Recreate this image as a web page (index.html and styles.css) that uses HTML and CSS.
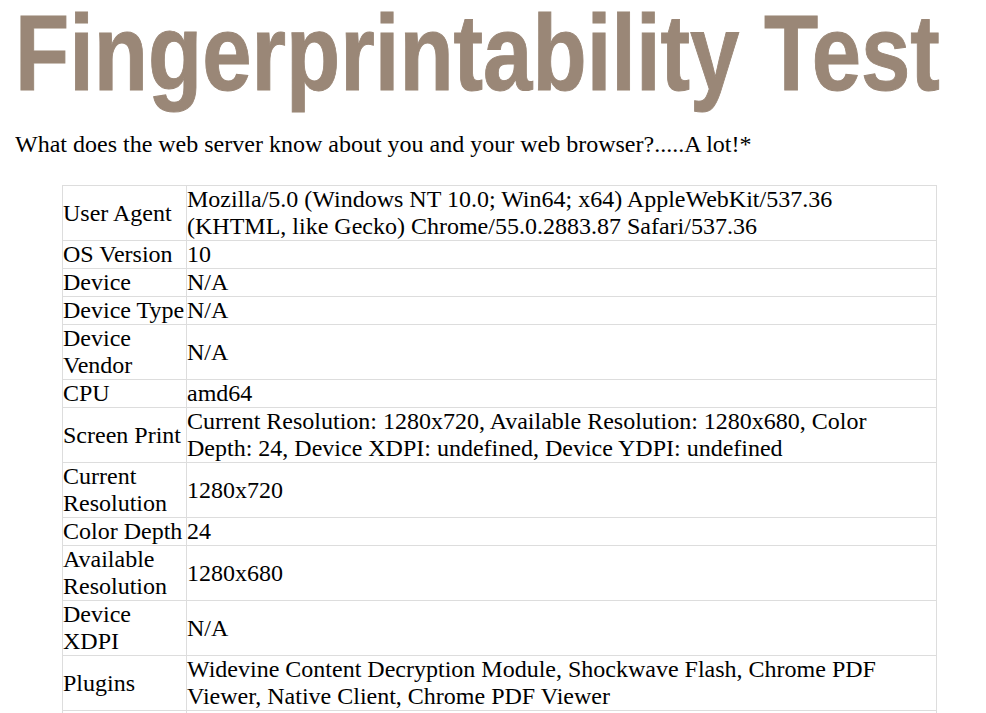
FILE: index.html
```html
<!DOCTYPE html>
<html>
<head>
<meta charset="utf-8">
<link rel="stylesheet" href="styles.css">
</head>
<body>
<h1 class="title"><span class="title-text">Fingerprintability Test</span></h1>
<p class="intro">What does the web server know about you and your web browser?.....A lot!*</p>
<table class="info">
<tr><td class="k">User Agent</td><td>Mozilla/5.0 (Windows NT 10.0; Win64; x64) AppleWebKit/537.36 (KHTML, like Gecko) Chrome/55.0.2883.87 Safari/537.36</td></tr>
<tr><td class="k">OS Version</td><td>10</td></tr>
<tr><td class="k">Device</td><td>N/A</td></tr>
<tr><td class="k">Device Type</td><td>N/A</td></tr>
<tr><td class="k">Device Vendor</td><td>N/A</td></tr>
<tr><td class="k">CPU</td><td>amd64</td></tr>
<tr><td class="k">Screen Print</td><td>Current Resolution: 1280x720, Available Resolution: 1280x680, Color Depth: 24, Device XDPI: undefined, Device YDPI: undefined</td></tr>
<tr><td class="k">Current Resolution</td><td>1280x720</td></tr>
<tr><td class="k">Color Depth</td><td>24</td></tr>
<tr><td class="k">Available Resolution</td><td>1280x680</td></tr>
<tr><td class="k">Device XDPI</td><td>N/A</td></tr>
<tr><td class="k">Plugins</td><td>Widevine Content Decryption Module, Shockwave Flash, Chrome PDF Viewer, Native Client, Chrome PDF Viewer</td></tr>
<tr><td class="k">Device YDPI</td><td>N/A</td></tr>
</table>
</body>
</html>
```
FILE: styles.css
```css
body {
  margin: 0 0 0 15px;
  font-family: "Liberation Serif", "Times New Roman", serif;
  font-size: 24px;
  color: #000;
  background: #fff;
}
.title {
  margin: 0;
  width: 960px;
  overflow-x: clip;
  overflow-y: visible;
  font-family: "Liberation Sans", Arial, sans-serif;
  font-weight: bold;
  font-size: 107px;
  line-height: 106px;
  height: 106px;
  color: #9a8777;
  white-space: nowrap;
}
.title-text {
  display: inline-block;
  transform: scaleX(0.829);
  transform-origin: left center;
  -webkit-text-stroke: 1px #9a8777;
}
.intro {
  margin: 24px 0 0 0;
  line-height: 28px;
}
.info {
  margin: 27px 0 0 47px;
  width: 875px;
  border-collapse: collapse;
}
.info td {
  border: 1px solid #ddd;
  padding: 0;
  line-height: 27px;
  vertical-align: middle;
  text-align: left;
}
.info td.k {
  width: 123px;
}
```
